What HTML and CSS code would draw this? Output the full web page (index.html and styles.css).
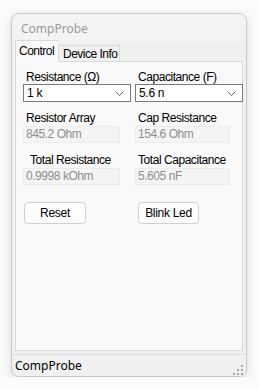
FILE: index.html
```html
<!DOCTYPE html>
<html lang="en">
<head>
    <meta charset="UTF-8">
    <meta name="viewport" content="width=device-width, initial-scale=1.0">
    <title>CompProbe</title>
    <link rel="stylesheet" href="styles.css">
</head>
<body>
    <!-- window -->
    <div class="window">
        <div class="titlebar">CompProbe</div>

        <div class="client">
            <!-- tabs -->
            <div class="tabs">
                <div class="tab active">Control</div>
                <div class="tab">Device Info</div>
            </div>

            <div class="page">
                <div class="grid">
                    <div class="field">
                        <div class="label">Resistance (&Omega;)</div>
                        <div class="combo">
                            <span>1 k</span>
                            <svg class="chev" width="9" height="5" viewBox="0 0 9 5"><path d="M0.5 0.5 L4.5 4.5 L8.5 0.5" fill="none" stroke="#6a6a6a" stroke-width="1"/></svg>
                        </div>
                    </div>
                    <div class="field">
                        <div class="label">Capacitance (F)</div>
                        <div class="combo">
                            <span>5.6 n</span>
                            <svg class="chev" width="9" height="5" viewBox="0 0 9 5"><path d="M0.5 0.5 L4.5 4.5 L8.5 0.5" fill="none" stroke="#6a6a6a" stroke-width="1"/></svg>
                        </div>
                    </div>

                    <div class="field">
                        <div class="label l2">Resistor Array</div>
                        <div class="value">845.2 Ohm</div>
                    </div>
                    <div class="field">
                        <div class="label l2">Cap Resistance</div>
                        <div class="value">154.6 Ohm</div>
                    </div>

                    <div class="field">
                        <div class="label l3">Total Resistance</div>
                        <div class="value">0.9998 kOhm</div>
                    </div>
                    <div class="field">
                        <div class="label l3">Total Capacitance</div>
                        <div class="value">5.605 nF</div>
                    </div>

                    <div class="field">
                        <button class="btn">Reset</button>
                    </div>
                    <div class="field">
                        <button class="btn btn2">Blink Led</button>
                    </div>
                </div>
            </div>
        </div>

        <!-- status bar -->
        <div class="status">
            <span>CompProbe</span>
            <svg class="grip" width="10" height="10" viewBox="0 0 10 10">
                <rect x="8" y="0" width="2" height="2" fill="#a8a8a8"/>
                <rect x="4" y="4" width="2" height="2" fill="#a8a8a8"/>
                <rect x="8" y="4" width="2" height="2" fill="#a8a8a8"/>
                <rect x="0" y="8" width="2" height="2" fill="#a8a8a8"/>
                <rect x="4" y="8" width="2" height="2" fill="#a8a8a8"/>
                <rect x="8" y="8" width="2" height="2" fill="#a8a8a8"/>
            </svg>
        </div>
    </div>
</body>
</html>
```

FILE: styles.css
```css
* {
    margin: 0;
    padding: 0;
    box-sizing: border-box;
}

body {
    background-color: #fbfbfb;
    font-family: "Liberation Sans", Arial, sans-serif;
    font-size: 11px;
    letter-spacing: -0.15px;
    color: #000;
}

/* window frame */
.window {
    width: 236px;
    height: 364px;
    margin: 13px 0 0 11px;
    border: 1px solid #c9c9c9;
    border-radius: 8px;
    background-color: #f0f0f0;
    box-shadow: 0 2px 10px rgba(0, 0, 0, 0.14);
    display: flex;
    flex-direction: column;
    overflow: hidden;
}

.titlebar {
    height: 29px;
    padding: 6px 0 0 9px;
    background-color: #f3f3f3;
    color: #9a9a9a;
    font-family: "Noto Sans", "Open Sans", sans-serif;
    font-size: 12px;
    letter-spacing: 0;
}

.client {
    flex: 1;
    padding: 0 3px 0 3px;
    display: flex;
    flex-direction: column;
}

/* tabs */
.tabs {
    display: flex;
    align-items: flex-end;
    height: 20px;
    position: relative;
    z-index: 1;
}

.tab {
    width: 62px;
    height: 16px;
    padding: 1px 0 0 4px;
    background-color: #f0f0f0;
    border: 1px solid #d9d9d9;
    border-bottom: none;
    line-height: 14px;
    font-size: 12px;
    letter-spacing: -0.5px;
    white-space: nowrap;
    overflow: hidden;
}

.tab.active {
    width: 43px;
    height: 22px;
    margin-bottom: -1px;
    padding: 3px 0 0 3px;
    background-color: #f9f9f9;
    border-right: none;
}

.page {
    height: 290px;
    border: 1px solid #d9d9d9;
    background-color: #f9f9f9;
    padding: 8px 0 0 7px;
}

.grid {
    display: grid;
    grid-template-columns: 108px 108px;
    column-gap: 4px;
}

.label {
    height: 14px;
    line-height: 14px;
    padding-left: 3px;
    font-size: 12px;
    letter-spacing: -0.45px;
    white-space: nowrap;
}

.l2 {
    margin-top: 9px;
    padding-left: 3px;
}

.l3 {
    margin-top: 10px;
    padding-left: 7px;
}

.grid .field:nth-child(6) .l3 {
    padding-left: 3px;
}

.combo {
    height: 18px;
    border: 1px solid #7a7a7a;
    background-color: #fff;
    display: flex;
    align-items: center;
    justify-content: space-between;
    padding: 0 6px 0 3px;
    line-height: 16px;
    font-size: 12px;
    letter-spacing: -0.3px;
}

.value {
    width: 97px;
    height: 17px;
    margin-top: 1px;
    border: 1px solid #ececec;
    background-color: #f4f4f4;
    color: #8e8e8e;
    padding-left: 2px;
    line-height: 15px;
    font-size: 12px;
    letter-spacing: -0.45px;
}

.grid .field:nth-child(4) .value,
.grid .field:nth-child(6) .value {
    width: 95px;
}

.btn {
    width: 62px;
    height: 22px;
    margin: 17px 0 0 1px;
    border: 1px solid #d0d0d0;
    border-radius: 4px;
    background-color: #fdfdfd;
    font-family: "Liberation Sans", Arial, sans-serif;
    font-size: 12px;
    letter-spacing: -0.3px;
    color: #000;
}

.btn2 {
    margin-left: 3px;
    width: 61px;
}

/* status bar */
.status {
    height: 24px;
    margin-top: 3px;
    border-top: 1px solid #dcdcdc;
    background-color: #f0f0f0;
    display: flex;
    align-items: center;
    justify-content: space-between;
    padding: 0 3px 0 3px;
    font-family: "Noto Sans", "Open Sans", sans-serif;
    font-size: 12px;
    letter-spacing: 0;
}

.grip {
    align-self: flex-end;
    margin-bottom: 1px;
}
```
